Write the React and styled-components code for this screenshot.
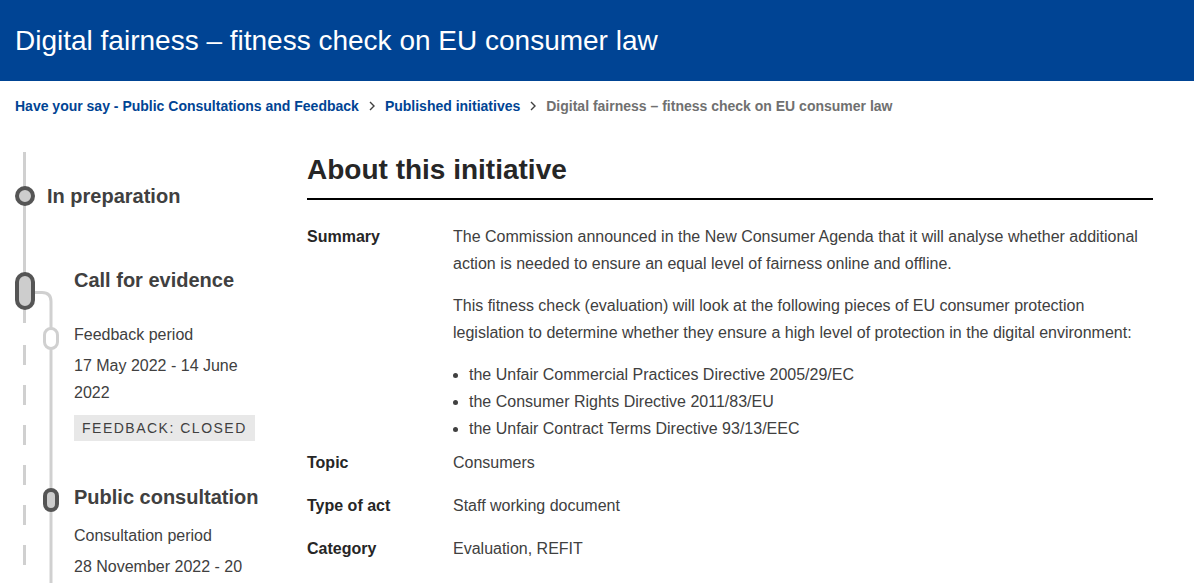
import React from "react";
import styled, { createGlobalStyle } from "styled-components";

const crumbs = [
  { label: "Have your say - Public Consultations and Feedback", link: true },
  { label: "Published initiatives", link: true },
  { label: "Digital fairness – fitness check on EU consumer law", link: false },
];

const directives = [
  "the Unfair Commercial Practices Directive 2005/29/EC",
  "the Consumer Rights Directive 2011/83/EU",
  "the Unfair Contract Terms Directive 93/13/EEC",
];

const details = [
  { label: "Topic", value: "Consumers" },
  { label: "Type of act", value: "Staff working document" },
  { label: "Category", value: "Evaluation, REFIT" },
];

const GlobalStyle = createGlobalStyle`
  body {
    margin: 0;
    background: #fff;
    font-family: "Liberation Sans", Arial, sans-serif;
    color: #404040;
  }
`;

const Chevron = () => (
  <svg width="6" height="10" viewBox="0 0 6 10">
    <path d="M1 1 L5 5 L1 9" fill="none" stroke="#404040" strokeWidth="1.4" />
  </svg>
);

// the rail drawing behind the timeline text (coords relative to timeline top)
const Rail = () => (
  <RailSvg width="80" height="440" viewBox="0 0 80 440">
    <g stroke="#d0d0d0" strokeWidth="3" fill="none">
      <line x1="24.5" y1="2" x2="24.5" y2="173" />
      <line x1="24.5" y1="195" x2="24.5" y2="440" strokeDasharray="20 20" />
      <path d="M35 142.5 H42 Q51 142.5 51 151.5 V180" />
      <line x1="51" y1="199" x2="51" y2="341" />
      <line x1="51" y1="360" x2="51" y2="440" />
    </g>
    <circle cx="25" cy="46" r="8" fill="#cdcdcd" stroke="#555" strokeWidth="4" />
    <rect x="17" y="124" width="16" height="34" rx="8" fill="#cdcdcd" stroke="#555" strokeWidth="4" />
    <rect x="44.5" y="178.5" width="13" height="20" rx="6.5" fill="#fff" stroke="#d0d0d0" strokeWidth="3" />
    <rect x="45" y="340" width="12" height="20" rx="6" fill="#cdcdcd" stroke="#555" strokeWidth="4" />
  </RailSvg>
);

const App = () => {
  return (
    <>
      <GlobalStyle />
      <Header>
        <h1>Digital fairness – fitness check on EU consumer law</h1>
      </Header>
      <Breadcrumb>
        {crumbs.map(({ label, link }, i) => (
          <React.Fragment key={label}>
            {i > 0 && (
              <Sep>
                <Chevron />
              </Sep>
            )}
            <Crumb $link={link}>{label}</Crumb>
          </React.Fragment>
        ))}
      </Breadcrumb>
      <Main>
        <Timeline>
          <Rail />
          <StageTitle>In preparation</StageTitle>
          <Phase $top={60}>
            <PhaseTitle>Call for evidence</PhaseTitle>
            <Meta $top={29}>Feedback period</Meta>
            <Dates>17 May 2022 - 14 June 2022</Dates>
            <Badge>Feedback: closed</Badge>
          </Phase>
          <Phase $top={44}>
            <PhaseTitle>Public consultation</PhaseTitle>
            <Meta $top={13}>Consultation period</Meta>
            <Dates>28 November 2022 - 20 February 2023</Dates>
          </Phase>
        </Timeline>
        <Content>
          <Heading>About this initiative</Heading>
          <Row $after={7}>
            <Label>Summary</Label>
            <Value>
              <p>
                The Commission announced in the New Consumer Agenda that it will
                analyse whether additional action is needed to ensure an equal
                level of fairness online and offline.
              </p>
              <p>
                This fitness check (evaluation) will look at the following pieces
                of EU consumer protection legislation to determine whether they
                ensure a high level of protection in the digital environment:
              </p>
              <ul>
                {directives.map((d) => (
                  <li key={d}>{d}</li>
                ))}
              </ul>
            </Value>
          </Row>
          {details.map(({ label, value }) => (
            <Row key={label} $after={16}>
              <Label>{label}</Label>
              <Value>{value}</Value>
            </Row>
          ))}
        </Content>
      </Main>
    </>
  );
};

export default App;

const Header = styled.header`
  height: 81px;
  background-color: #004494;
  display: flex;
  align-items: center;
  padding: 0 15px;
  h1 {
    margin: 0;
    color: #fff;
    font-size: 28px;
    font-weight: 400;
    line-height: 34px;
  }
`;

const Breadcrumb = styled.nav`
  display: flex;
  align-items: center;
  padding: 15px 15px 0;
  font-size: 14px;
  font-weight: 700;
  line-height: 20px;
`;

const Crumb = styled.span`
  color: ${({ $link }) => ($link ? "#004494" : "#707070")};
`;

const Sep = styled.span`
  display: flex;
  margin: 0 10px;
`;

const Main = styled.main`
  display: flex;
  margin-top: 34px;
  height: 433px;
  overflow: hidden;
`;

const Timeline = styled.div`
  position: relative;
  width: 307px;
  flex-shrink: 0;
`;

const RailSvg = styled.svg`
  position: absolute;
  left: 0;
  top: 0;
`;

const StageTitle = styled.div`
  position: relative;
  margin-top: 34px;
  padding-left: 47px;
  font-size: 20px;
  font-weight: 700;
  line-height: 24px;
  color: #404040;
`;

const Phase = styled.div`
  position: relative;
  margin-top: ${({ $top }) => $top}px;
  padding-left: 74px;
  width: 195px;
`;

const PhaseTitle = styled.div`
  font-size: 20px;
  font-weight: 700;
  line-height: 24px;
  color: #404040;
`;

const Meta = styled.div`
  margin-top: ${({ $top }) => $top}px;
  font-size: 16px;
  line-height: 27px;
`;

const Dates = styled.div`
  margin-top: 4px;
  font-size: 16px;
  line-height: 27px;
`;

const Badge = styled.div`
  display: inline-block;
  margin-top: 9px;
  padding: 0 8px;
  background-color: #e8e8e8;
  font-size: 14px;
  line-height: 26px;
  letter-spacing: 1.5px;
  text-transform: uppercase;
  color: #404040;
`;

const Content = styled.section`
  flex: 1;
  padding-right: 41px;
`;

const Heading = styled.h2`
  margin: 3px 0 23px;
  padding-bottom: 11px;
  border-bottom: 2px solid #000;
  font-size: 28px;
  font-weight: 700;
  line-height: 34px;
  color: #262626;
`;

const Row = styled.div`
  display: grid;
  grid-template-columns: 146px 1fr;
  margin-bottom: ${({ $after }) => $after}px;
  font-size: 16px;
  line-height: 27px;
`;

const Label = styled.div`
  font-weight: 700;
  color: #262626;
`;

const Value = styled.div`
  color: #404040;
  p {
    margin: 0 0 15px;
  }
  ul {
    margin: 0;
    padding-left: 16px;
  }
`;
